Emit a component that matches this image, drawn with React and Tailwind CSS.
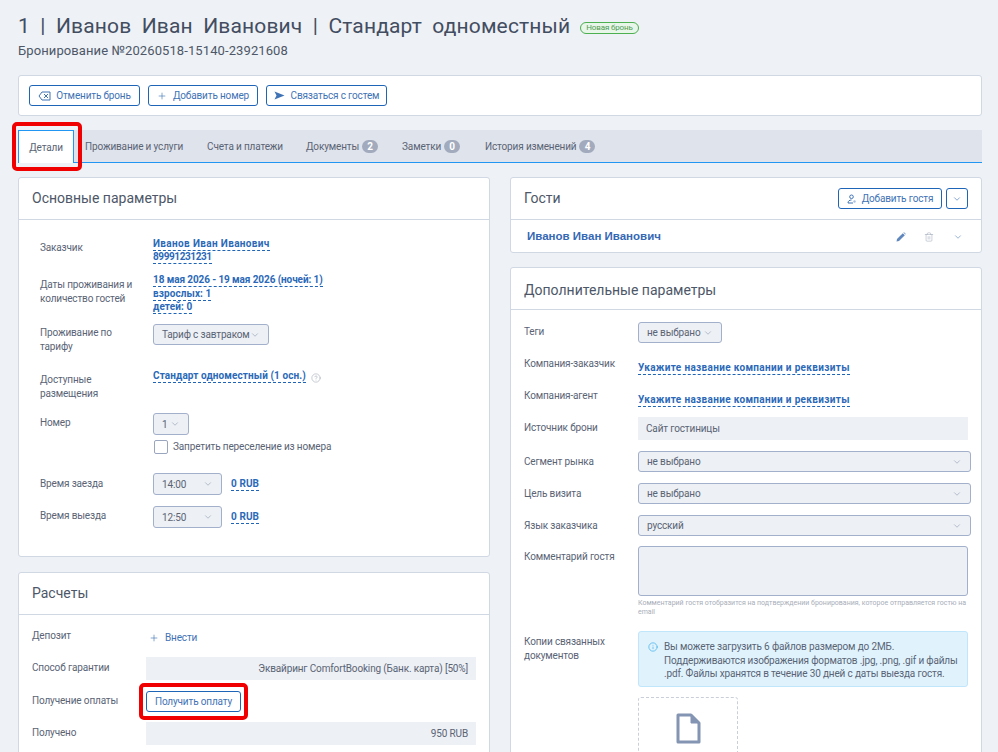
import { Plus, ChevronDown, Info, Trash2, CircleHelp } from 'lucide-react'

const textColor = 'text-[#5a6475]'

function Chevron({ className = '' }) {
  return <ChevronDown size={10} strokeWidth={1.5} className={`text-[#8f9bb3] shrink-0 ${className}`} />
}

function Button({ children, className = '' }) {
  return (
    <button className={`flex items-center justify-center h-[21px] rounded-[3px] border border-[#1e65b8] bg-white text-[10px] text-[#3f73b5] whitespace-nowrap ${className}`}>
      {children}
    </button>
  )
}

function Select({ children, tall = false, className = '' }) {
  return (
    <div className={`flex items-center justify-between ${tall ? 'h-[22px]' : 'h-[21px]'} pl-[8px] pr-[8px] rounded-[3px] border border-[#a3b0cb] bg-[#edf0f4] text-[10px] text-[#5a6475] whitespace-nowrap ${className}`}>
      <span>{children}</span>
      <Chevron />
    </div>
  )
}

function DashLink({ children, className = 'tracking-[0.1px]' }) {
  return (
    <span className={`inline-block leading-[12px] border-b border-dashed border-[#1e65b8] text-[10px] font-bold text-[#2b69b8] whitespace-nowrap ${className}`}>
      {children}
    </span>
  )
}

function Badge({ n }) {
  return (
    <span className="ml-[3px] flex items-center justify-center w-[16px] h-[13px] rounded-full bg-[#a2abbd] text-[10px] font-bold text-white">
      {n}
    </span>
  )
}

function Tab({ children, className = '' }) {
  return <div className={`flex items-center text-[10px] text-[#5a6475] whitespace-nowrap ${className}`}>{children}</div>
}

function Card({ title, right, children, className = '' }) {
  return (
    <section className={`rounded-[3px] border border-[#d0d8e4] bg-white ${className}`}>
      <div className="flex items-center justify-between h-[42px] px-[13px] border-b border-[#d0d8e4]">
        <h2 className="text-[14px] tracking-normal text-[#4d5768]">{title}</h2>
        {right}
      </div>
      {children}
    </section>
  )
}

// pad is the label's top offset, so it lines up with the control on its right
function Row({ label, children, labelClass = 'w-[134px] pl-[21px]', pad = 'pt-[4px]', className = '' }) {
  return (
    <div className={`flex items-start ${className}`}>
      <div className={`shrink-0 text-[10px] leading-[14px] ${textColor} ${labelClass} ${pad}`}>{label}</div>
      <div className="flex-1 min-w-0">{children}</div>
    </div>
  )
}

function SideRow({ label, children, pad = 'pt-[3px]', className = '' }) {
  return (
    <Row label={label} labelClass="w-[127px] pl-[13px]" pad={pad} className={className}>
      {children}
    </Row>
  )
}

function GreyValue({ children }) {
  return (
    <div className="flex items-center justify-end h-[23px] mr-[13px] pr-[8px] bg-[#edf0f4] text-[10px] text-[#5a6475]">
      {children}
    </div>
  )
}

export default function App() {
  return (
    <div className="h-screen overflow-hidden bg-[#eef1f5] pl-[18px] pr-[16px] pt-[12px] font-['Roboto',sans-serif] tracking-[-0.15px]">
      <div className="flex items-center h-[29px]">
        <h1 className="text-[21px] text-[#434d61] tracking-[0.15px] [word-spacing:5px] whitespace-nowrap">1 | Иванов Иван Иванович | Стандарт одноместный</h1>
        <span className="ml-[10px] mt-[2px] flex items-center h-[12px] px-[5px] rounded-full border border-[#4caf50] bg-[#e8f5e9] text-[8px] text-[#4f9d54]">Новая бронь</span>
      </div>
      <p className="mt-[2px] h-[16px] text-[13px] leading-[16px] text-[#4d5768] tracking-[0.1px]">Бронирование №20260518-15140-23921608</p>

      <div className="mt-[16px] flex items-center gap-[8px] h-[41px] pl-[10px] rounded-[3px] border border-[#d0d8e4] bg-white">
        <Button className="w-[111px] gap-[5px]">
          <svg width="13" height="10" viewBox="0 0 13 10" fill="none" stroke="#3f73b5" strokeWidth="1">
            <path d="M4 1h8v8H4L1 5z" />
            <path d="M6 3l4 4M10 3l-4 4" />
          </svg>
          Отменить бронь
        </Button>
        <Button className="w-[110px] gap-[6px]">
          <Plus size={10} strokeWidth={1.5} />
          Добавить номер
        </Button>
        <Button className="w-[121px] gap-[6px]">
          <svg width="11" height="9" viewBox="0 0 11 9" fill="#3f73b5">
            <path d="M0.5 0.5L10.5 4.5L0.5 8.5L2.5 4.5z" />
          </svg>
          Связаться с гостем
        </Button>
      </div>

      <div className="mt-[14px] flex items-stretch h-[33px] bg-[#dfe3eb] border-b border-[#2196f3]">
        <div className="relative flex items-center justify-center w-[56px] h-[33px] bg-white border border-b-0 border-[#2196f3] text-[10px] text-[#5a6475]">
          Детали
          <div className="absolute -left-[7px] -top-[9px] w-[70px] h-[49px] rounded-[5px] border-[4px] border-[#f00000]" />
        </div>
        <Tab className="ml-[11px]">Проживание и услуги</Tab>
        <Tab className="ml-[24px]">Счета и платежи</Tab>
        <Tab className="ml-[23px]">Документы <Badge n="2" /></Tab>
        <Tab className="ml-[24px]">Заметки <Badge n="0" /></Tab>
        <Tab className="ml-[25px]">История изменений <Badge n="4" /></Tab>
      </div>

      <div className="mt-[14px] flex items-start gap-[20px]">
        <div className="w-[472px] shrink-0">
          <Card title="Основные параметры" className="h-[380px]">
            <div className="pt-[18px]">
              <Row label="Заказчик" pad="pt-[3px]" className="h-[36px]">
                <div className="flex flex-col items-start">
                  <DashLink className="tracking-[0.35px]">Иванов Иван Иванович</DashLink>
                  <DashLink className="tracking-[-0.4px]">89991231231</DashLink>
                </div>
              </Row>
              <Row label={<>Даты проживания и<br />количество гостей</>} className="h-[50px]">
                <div className="flex flex-col items-start">
                  <DashLink className="mb-[1px] tracking-[-0.1px]">18 мая 2026 - 19 мая 2026 (ночей: 1)</DashLink>
                  <DashLink>взрослых: 1</DashLink>
                  <DashLink>детей: 0</DashLink>
                </div>
              </Row>
              <Row label={<>Проживание по<br />тарифу</>} pad="pt-[2px]" className="h-[49px]">
                <Select className="w-[116px]">Тариф с завтраком</Select>
              </Row>
              <Row label={<>Доступные<br />размещения</>} pad="pt-[0px]" className="h-[40px]">
                <div className="-mt-[4px] flex items-center gap-[5px]">
                  <DashLink>Стандарт одноместный (1 осн.)</DashLink>
                  <CircleHelp size={10} strokeWidth={1} className="mt-[4px] text-[#7d8698]" />
                </div>
              </Row>
              <Row label="Номер" pad="pt-[3px]" className="h-[60px]">
                <Select tall className="w-[36px]">1</Select>
                <label className="mt-[5px] flex items-start gap-[5px]">
                  <span className="ml-[1px] w-[14px] h-[14px] rounded-[2px] border border-[#9aa6bd] bg-white" />
                  <span className={`text-[10px] leading-[13px] ${textColor}`}>Запретить переселение из номера</span>
                </label>
              </Row>
              <Row label="Время заезда" className="h-[33px]">
                <div className="flex items-center gap-[9px]">
                  <Select tall className="w-[69px]">14:00</Select>
                  <DashLink>0 RUB</DashLink>
                </div>
              </Row>
              <Row label="Время выезда" pad="pt-[3px]" className="h-[32px]">
                <div className="flex items-center gap-[9px]">
                  <Select tall className="w-[69px]">12:50</Select>
                  <DashLink>0 RUB</DashLink>
                </div>
              </Row>
            </div>
          </Card>

          <Card title="Расчеты" className="mt-[15px] h-[300px]">
            <div className="pt-[11px]">
              <SideRow label="Депозит" className="h-[31px]">
                <div className="ml-[3px] pt-[4px] flex items-center gap-[6px] text-[10px] text-[#3f73b5]">
                  <Plus size={10} strokeWidth={1.5} />
                  Внести
                </div>
              </SideRow>
              <SideRow label="Способ гарантии" pad="pt-[4px]" className="h-[34px]">
                <GreyValue>Эквайринг ComfortBooking (Банк. карта) [50%]</GreyValue>
              </SideRow>
              <SideRow label="Получение оплаты" className="h-[31px]">
                <div className="relative w-[95px]">
                  <Button className="w-[95px]">Получить оплату</Button>
                  <div className="absolute -left-[7px] -top-[8px] w-[109px] h-[37px] rounded-[5px] border-[4px] border-[#f00000]" />
                </div>
              </SideRow>
              <SideRow label="Получено" pad="pt-[4px]" className="h-[33px]">
                <GreyValue>950 RUB</GreyValue>
              </SideRow>
            </div>
          </Card>
        </div>

        <div className="flex-1 min-w-0">
          <Card
            title="Гости"
            right={
              <div className="flex items-center gap-[4px]">
                <Button className="w-[104px] gap-[5px]">
                  <svg width="10" height="10" viewBox="0 0 10 10" fill="none" stroke="#3f73b5" strokeWidth="1">
                    <circle cx="4.5" cy="2.8" r="1.8" />
                    <path d="M1 9c0-2 1.5-3 3.5-3" />
                    <path d="M1 9h5" />
                    <circle cx="7.5" cy="7.5" r="1.2" fill="#a9c0de" stroke="none" />
                  </svg>
                  Добавить гостя
                </Button>
                <Button className="w-[22px]">
                  <ChevronDown size={10} strokeWidth={1.5} />
                </Button>
              </div>
            }
          >
            <div className="flex items-center h-[32px] pt-[1px] pl-[16px] pr-[18px]">
              <span className="flex-1 font-['Liberation_Sans',sans-serif] text-[11.5px] font-bold tracking-normal text-[#3568b5]">Иванов Иван Иванович</span>
              <svg width="10" height="10" viewBox="0 0 10 10" fill="#5f86bd">
                <path d="M0.5 9.5L1 7L6.8 1.2L8.8 3.2L3 9z" />
                <path d="M7.4 0.6L8 0.2L9.8 2L9.4 2.6z" />
              </svg>
              <Trash2 size={10} strokeWidth={1.2} className="ml-[18px] text-[#98a2b3]" />
              <ChevronDown size={10} strokeWidth={1.5} className="ml-[19px] text-[#5f86bd]" />
            </div>
          </Card>

          <Card title={<span className="block pt-[3px]">Дополнительные параметры</span>} className="mt-[14px] h-[600px]">
            <div className="pt-[12px]">
              <SideRow label="Теги" className="h-[32px]">
                <Select className="w-[84px]">не выбрано</Select>
              </SideRow>
              <SideRow label="Компания-заказчик" className="h-[32px]">
                <DashLink className="mt-[2px] tracking-[0.33px]">Укажите название компании и реквизиты</DashLink>
              </SideRow>
              <SideRow label="Компания-агент" className="h-[31px]">
                <DashLink className="mt-[3px] tracking-[0.33px]">Укажите название компании и реквизиты</DashLink>
              </SideRow>
              <SideRow label="Источник брони" pad="pt-[4px]" className="h-[34px]">
                <div className={`flex items-center h-[23px] mr-[13px] pl-[8px] bg-[#edf0f4] text-[10px] ${textColor}`}>Сайт гостиницы</div>
              </SideRow>
              <SideRow label="Сегмент рынка" pad="pt-[4px]" className="h-[32px]">
                <Select className="mr-[10px]">не выбрано</Select>
              </SideRow>
              <SideRow label="Цель визита" pad="pt-[4px]" className="h-[32px]">
                <Select className="mr-[10px]">не выбрано</Select>
              </SideRow>
              <SideRow label="Язык заказчика" pad="pt-[4px]" className="h-[31px]">
                <Select className="mr-[10px]">русский</Select>
              </SideRow>
              <SideRow label="Комментарий гостя" pad="pt-[4px]" className="h-[85px]">
                <div className="h-[50px] mr-[13px] rounded-[3px] border border-[#a3b0cb] bg-[#edf0f4]" />
                <p className="mt-[3px] mr-[13px] text-[7px] leading-[9px] tracking-normal text-[#a8aeb9]">Комментарий гостя отобразится на подтверждении бронирования, которое отправляется гостю на email</p>
              </SideRow>
              <SideRow label={<>Копии связанных<br />документов</>} pad="pt-[4px]" className="h-[200px]">
                <div className={`flex gap-[6px] h-[56px] mr-[13px] pl-[9px] pt-[8px] rounded-[3px] border border-[#bfe6fb] bg-[#e0f3fd] text-[10px] leading-[13.5px] ${textColor}`}>
                  <Info size={10} strokeWidth={1.5} className="mt-[2px] shrink-0 text-[#2aa5ea]" />
                  <p>Вы можете загрузить 6 файлов размером до 2МБ.<br />Поддерживаются изображения форматов .jpg, .png, .gif и файлы<br />.pdf. Файлы хранятся в течение 30 дней с даты выезда гостя.</p>
                </div>
                <div className="mt-[10px] flex justify-center pt-[15px] w-[100px] h-[100px] rounded-[3px] border border-dashed border-[#c9ced8]">
                  <svg width="25" height="31" viewBox="0 0 25 31" fill="none" stroke="#8494b3" strokeWidth="3" strokeLinejoin="round">
                    <path d="M2 2h13l8 8v19H2z" />
                    <path d="M15 2v8h8" fill="#8494b3" strokeWidth="1" />
                  </svg>
                </div>
              </SideRow>
            </div>
          </Card>
        </div>
      </div>
    </div>
  )
}
